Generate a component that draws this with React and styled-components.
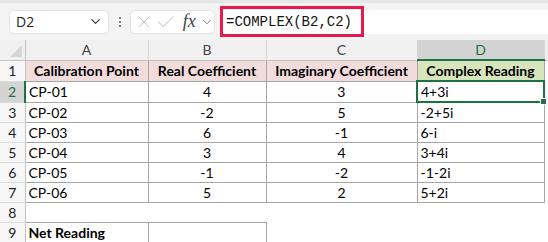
import React from "react";
import styled, { createGlobalStyle, css } from "styled-components";
import { ChevronDown, X, Check } from "lucide-react";

const Global = createGlobalStyle`
  html, body { margin: 0; padding: 0; background: #fff; }
  body { width: 548px; height: 242px; overflow: hidden; font-family: Lato, "Liberation Sans", sans-serif; }
`;

const Toolbar = styled.div`
  height: 40px;
  box-sizing: border-box;
  background: #f3f3f3;
  border-top: 3px solid #e6e6e6;
  display: flex;
  align-items: center;
  padding-left: 9px;
`;

const NameBox = styled.div`
  width: 100px;
  height: 24px;
  box-sizing: border-box;
  background: #fff;
  border: 1px solid #e3e3e3;
  border-radius: 5px;
  display: flex;
  align-items: center;
  justify-content: space-between;
  padding: 0 5px 0 6px;
  font-family: "Open Sans", "Noto Sans", sans-serif;
  font-size: 14px;
  color: #222;
`;

const Dots = styled.div`
  width: 21px;
  display: flex;
  flex-direction: column;
  align-items: center;
  gap: 2px;
  span { width: 2px; height: 2px; border-radius: 50%; background: #555; }
`;

const FxBox = styled.div`
  width: 85px;
  height: 24px;
  box-sizing: border-box;
  background: #fff;
  border: 1px solid #e3e3e3;
  border-radius: 5px;
  display: flex;
  align-items: center;
  padding-left: 3px;
  color: #c6c6c6;
  svg { flex: none; }
`;

const IconGap = styled.span`
  display: inline-block;
  width: ${(p) => p.$w}px;
`;

const Fx = styled.span`
  font-family: "Liberation Serif", serif;
  font-style: italic;
  font-size: 18px;
  color: #444;
  width: 18px;
`;

const FormulaBar = styled.div`
  flex: 1;
  height: 24px;
  margin-left: 8px;
  background: #fff;
  display: flex;
  align-items: center;
  padding-left: 3px;
`;

const Formula = styled.span`
  position: relative;
  font-family: "Liberation Mono", monospace;
  font-size: 14px;
  color: #111;
  padding-right: 8px;
  &::after {
    content: "";
    position: absolute;
    left: -6px;
    right: -4px;
    top: -8px;
    bottom: -7px;
    border: 3px solid #e8194c;
  }
`;

const Sheet = styled.table`
  border-collapse: collapse;
  table-layout: fixed;
  width: 548px;
  font-size: 14px;
  line-height: 17px;
`;

const Col = styled.col`
  width: ${(p) => p.$w}px;
`;

const Row = styled.tr`
  height: 20px;
`;

const ColHead = styled.th`
  height: 19px;
  padding: 0;
  font-weight: normal;
  font-size: 14px;
  color: #444;
  background: ${(p) => (p.$active ? "#d3d3d3" : "#f0f0f0")};
  border-right: 1px solid #d4d4d4;
  border-bottom: ${(p) => (p.$active ? "2px solid #1e7145" : "1px solid #c3c3c3")};
  ${(p) => p.$active && css`color: #1e7145;`}
`;

const Corner = styled.th`
  height: 19px;
  padding: 0;
  background: #f0f0f0;
  border-right: 1px solid #c3c3c3;
  border-bottom: 1px solid #c3c3c3;
  position: relative;
  &::after {
    content: "";
    position: absolute;
    right: 3px;
    bottom: 3px;
    border-left: 12px solid transparent;
    border-bottom: 12px solid #d6d6d6;
  }
`;

const RowHead = styled.th`
  height: 19px;
  padding: 0;
  font-weight: normal;
  font-size: 14px;
  color: #222;
  background: ${(p) => (p.$active ? "#d3d3d3" : "#f6f6f6")};
  border-bottom: 1px solid #dadada;
  border-right: ${(p) => (p.$active ? "2px solid #1e7145" : "1px solid #c3c3c3")};
  ${(p) => p.$active && css`color: #1e7145;`}
`;

const Cell = styled.td`
  height: 19px;
  padding: 0 3px;
  white-space: nowrap;
  overflow: hidden;
  color: #000;
  text-align: ${(p) => p.$align || "left"};
  font-weight: ${(p) => (p.$bold ? 700 : 400)};
  background: ${(p) => p.$bg || "transparent"};
  border: ${(p) => (p.$box ? "1px solid #a6a6a6" : "none")};
  ${(p) =>
    p.$active &&
    css`
      border: 2px solid #1e7145;
      position: relative;
      overflow: visible;
      &::after {
        content: "";
        position: absolute;
        right: -4px;
        bottom: -4px;
        width: 5px;
        height: 5px;
        background: #1e7145;
        border: 1px solid #fff;
      }
    `}
`;

const PINK = "#f2dcdb";
const GREEN = "#d8e4bc";

const rows = [
  ["CP-01", 4, 3, "4+3i"],
  ["CP-02", -2, 5, "-2+5i"],
  ["CP-03", 6, -1, "6-i"],
  ["CP-04", 3, 4, "3+4i"],
  ["CP-05", -1, -2, "-1-2i"],
  ["CP-06", 5, 2, "5+2i"],
];

export default function App() {
  return (
    <>
      <Global />
      <Toolbar>
        <NameBox>
          <span>D2</span>
          <ChevronDown size={15} color="#333" strokeWidth={1.7} />
        </NameBox>
        <Dots>
          <span />
          <span />
          <span />
        </Dots>
        <FxBox>
          <X size={20} strokeWidth={1.2} />
          <IconGap $w={1} />
          <Check size={22} strokeWidth={1.1} />
          <IconGap $w={6} />
          <Fx>fx</Fx>
          <ChevronDown size={14} color="#777" strokeWidth={1.6} />
        </FxBox>
        <FormulaBar>
          <Formula>=COMPLEX(B2,C2)</Formula>
        </FormulaBar>
      </Toolbar>
      <Sheet>
        <colgroup>
          <Col $w={25} />
          <Col $w={123} />
          <Col $w={118} />
          <Col $w={151} />
          <Col $w={127} />
          <Col $w={4} />
        </colgroup>
        <thead>
          <Row>
            <Corner />
            <ColHead>A</ColHead>
            <ColHead>B</ColHead>
            <ColHead>C</ColHead>
            <ColHead $active>D</ColHead>
            <ColHead />
          </Row>
        </thead>
        <tbody>
          <Row>
            <RowHead>1</RowHead>
            <Cell $box $bold $bg={PINK} $align="center">Calibration Point</Cell>
            <Cell $box $bold $bg={PINK} $align="center">Real Coefficient</Cell>
            <Cell $box $bold $bg={PINK} $align="center">Imaginary Coefficient</Cell>
            <Cell $box $bold $bg={GREEN} $align="center">Complex Reading</Cell>
            <Cell />
          </Row>
          {rows.map((r, i) => (
            <Row key={r[0]}>
              <RowHead $active={i === 0}>{i + 2}</RowHead>
              <Cell $box>{r[0]}</Cell>
              <Cell $box $align="center">{r[1]}</Cell>
              <Cell $box $align="center">{r[2]}</Cell>
              <Cell $box $active={i === 0}>{r[3]}</Cell>
              <Cell />
            </Row>
          ))}
          <Row>
            <RowHead>8</RowHead>
            <Cell />
            <Cell />
            <Cell />
            <Cell />
            <Cell />
          </Row>
          <Row>
            <RowHead>9</RowHead>
            <Cell $box $bold>Net Reading</Cell>
            <Cell $box />
            <Cell />
            <Cell />
            <Cell />
          </Row>
          <Row>
            <RowHead />
            <Cell />
            <Cell />
            <Cell />
            <Cell />
            <Cell />
          </Row>
        </tbody>
      </Sheet>
    </>
  );
}
